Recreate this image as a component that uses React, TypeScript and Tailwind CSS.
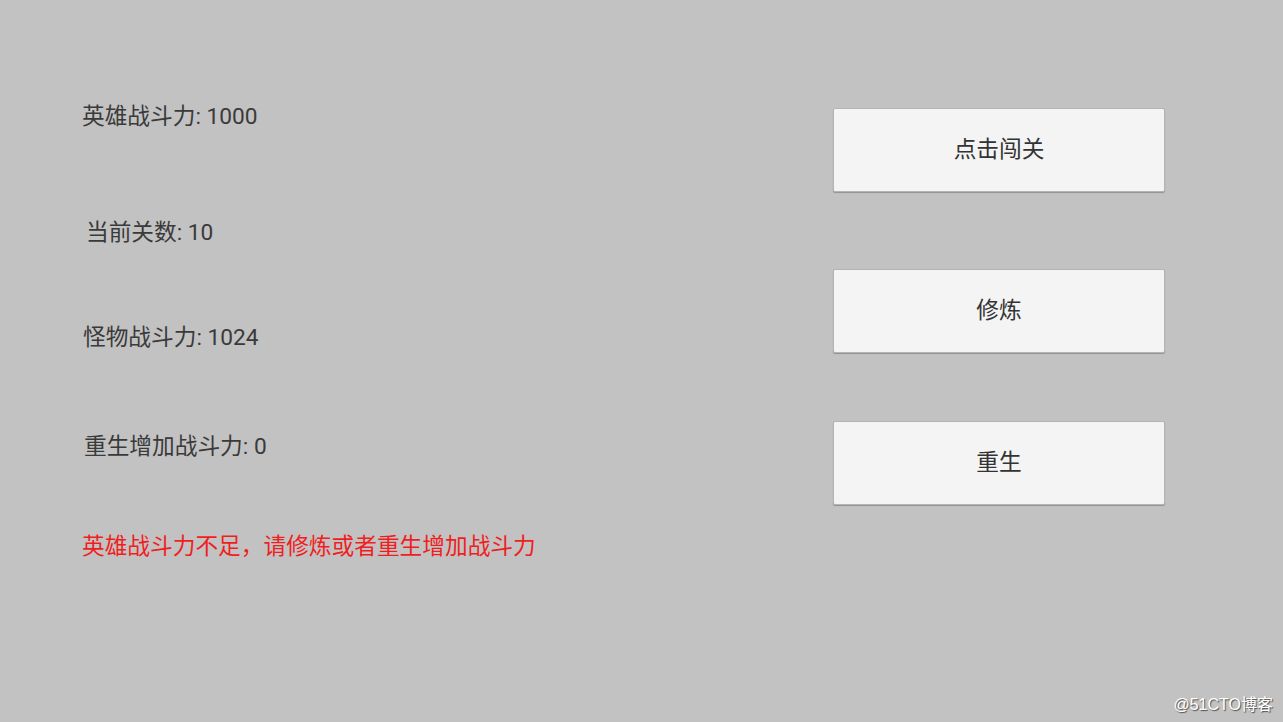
export default function App() {
  const font = { fontFamily: 'Roboto, "Noto Sans CJK SC", sans-serif' };
  return (
    <div className="relative w-[1283px] h-[722px] bg-[#c2c2c2] overflow-hidden" style={font}>
      <div className="flex">
        {/* Left: stats */}
        <div className="w-[833px] pl-[82px] text-[22.7px] leading-[30px] text-[#3a3a3a]">
          <div className="mt-[102px]">英雄战斗力: 1000</div>
          <div className="mt-[86px] pl-[4px]">当前关数: 10</div>
          <div className="mt-[75px] pl-[1px]">怪物战斗力: 1024</div>
          <div className="mt-[79px] pl-[2px]">重生增加战斗力: 0</div>
          <div className="mt-[70px] text-[#f01e1e]">英雄战斗力不足，请修炼或者重生增加战斗力</div>
        </div>

        {/* Right: buttons */}
        <div className="flex flex-col w-[332px]">
          <button className="mt-[108px] h-[84px] bg-[#f4f4f4] border border-[#b4b4b4] rounded-[2px] shadow-[0_1px_1px_rgba(0,0,0,0.25)] text-[22.7px] text-[#333]">
            点击闯关
          </button>
          <button className="mt-[77px] h-[84px] bg-[#f4f4f4] border border-[#b4b4b4] rounded-[2px] shadow-[0_1px_1px_rgba(0,0,0,0.25)] text-[22.7px] text-[#333]">
            修炼
          </button>
          <button className="mt-[68px] h-[84px] bg-[#f4f4f4] border border-[#b4b4b4] rounded-[2px] shadow-[0_1px_1px_rgba(0,0,0,0.25)] text-[22.7px] text-[#333]">
            重生
          </button>
        </div>
      </div>

      {/* watermark */}
      <div className="absolute right-[10px] bottom-[9px] text-[16px] leading-none text-white [text-shadow:1px_1px_1px_rgba(0,0,0,0.6)]" style={{ fontFamily: '"Liberation Sans", "Noto Sans CJK SC", sans-serif' }}>
        @51CTO博客
      </div>
    </div>
  );
}
